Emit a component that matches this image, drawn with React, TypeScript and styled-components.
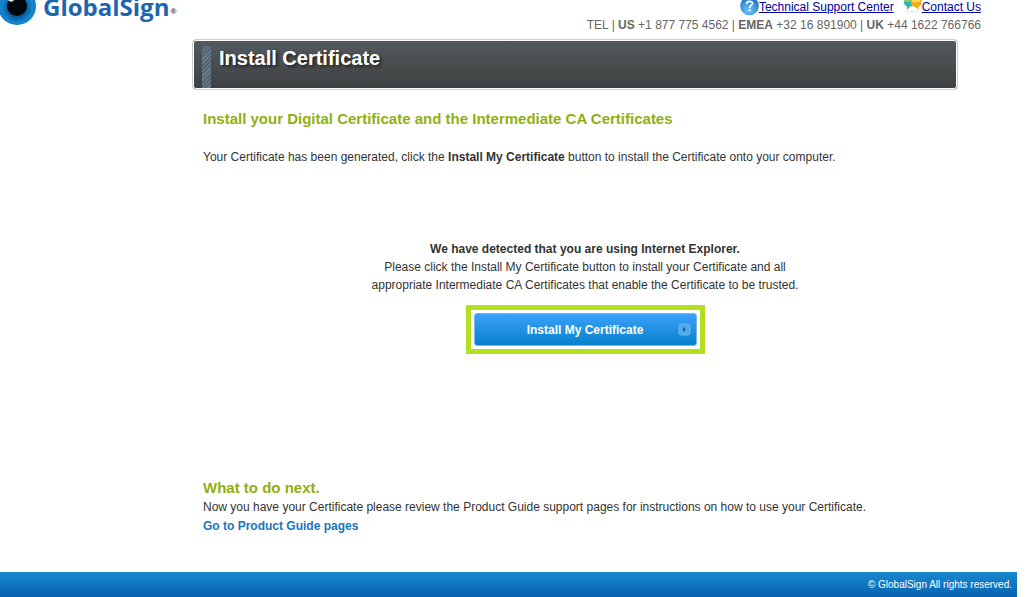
import React from "react";
import styled, { createGlobalStyle } from "styled-components";

const GlobalStyle = createGlobalStyle`
  *, *::before, *::after { box-sizing: border-box; }
  body {
    margin: 0;
    background: #fff;
    color: #333;
    font: 12px/18px "Liberation Sans", Arial, sans-serif;
  }
  h1, h2, p { margin: 0; }
`;

const Page = styled.div`
  display: flex;
  flex-direction: column;
  min-height: 100vh;
  margin-right: 13px;
`;

const Header = styled.header`
  display: flex;
  justify-content: space-between;
  align-items: flex-start;
  height: 39px;
  padding-right: 36px;
`;

const Brand = styled.a`
  display: flex;
  align-items: flex-start;
  color: #1c65b1;
  text-decoration: none;
`;

const EyeMark = styled.svg`
  display: block;
  width: 37px;
  height: 26px;
`;

const BrandName = styled.span`
  margin-left: 6px;
  font: bold 24px/14px "Open Sans", "Noto Sans", sans-serif;
`;

const Registered = styled.span`
  margin: 6px 0 0 1px;
  color: #333;
  font-size: 8px;
  font-weight: bold;
  line-height: 12px;
`;

const Contact = styled.div`
  color: #666;
  text-align: right;
`;

const SupportLinks = styled.nav`
  display: flex;
  justify-content: flex-end;
  gap: 10px;
  height: 16px;
`;

const SupportLink = styled.a`
  display: flex;
  align-items: flex-start;
  color: #0000a0;
  line-height: 14px;
  text-decoration: underline;
`;

const LinkIcon = styled.svg<{ $width: number }>`
  display: block;
  width: ${(p) => p.$width}px;
  height: 16px;
`;

const Main = styled.main`
  flex: 1;
  margin: 0 59px 0 192px;
`;

const Banner = styled.div`
  display: flex;
  height: 51px;
  padding: 6px 0 0 9px;
  border: 1px solid #c9cfd3;
  border-radius: 4px;
  box-shadow: inset 0 0 0 1px #fff;
  background: linear-gradient(#535a5e, #3d4040);
`;

const Stripe = styled.span`
  width: 9px;
  height: 42px;
  margin-right: 8px;
  border-radius: 2px 2px 0 0;
  background: repeating-linear-gradient(135deg, #6b7f8e 0 1px, #536675 1px 3px);
`;

const Title = styled.h1`
  color: #fff;
  font-size: 20px;
  line-height: 24px;
  text-shadow: 2px 2px 3px #222;
`;

const Content = styled.div`
  padding: 18px 11px 0;
`;

const Heading = styled.h2`
  color: #8fb010;
  font-size: 15px;
  line-height: 21px;
`;

const Intro = styled.p`
  margin-top: 19px;
`;

const Detected = styled.section`
  display: flex;
  flex-direction: column;
  align-items: center;
  margin: 74px 0 123px;
  padding-left: 20px;
  text-align: center;
`;

const Highlight = styled.div`
  margin-top: 11px;
  padding: 3px;
  border: 5px solid #b2e021;
`;

const InstallButton = styled.button`
  display: grid;
  grid-template-columns: 24px 1fr 24px;
  align-items: center;
  width: 223px;
  height: 33px;
  padding: 0;
  border: 1px solid #78b7ea;
  border-radius: 3px;
  background: linear-gradient(#3ba1fb, #0880cb);
  color: #fff;
  font: bold 12px/18px "Liberation Sans", Arial, sans-serif;
  cursor: pointer;
`;

const ButtonLabel = styled.span`
  grid-column: 2;
`;

const ArrowIcon = styled.svg`
  display: block;
  width: 13px;
  height: 13px;
  margin-left: 6px;
`;

const GuideLink = styled.a`
  display: block;
  color: #1b75b8;
  font-weight: bold;
  line-height: 20px;
  text-decoration: none;
`;

const Footer = styled.footer`
  height: 25px;
  padding-right: 5px;
  background: linear-gradient(#1989d0, #0762b1);
  color: #fff;
  font-size: 10px;
  line-height: 26px;
  text-align: right;
`;

function Eye() {
  return (
    <EyeMark viewBox="0 0 37 26" aria-hidden="true">
      <defs>
        <radialGradient id="iris" cx="50%" cy="55%" r="50%">
          <stop offset="50%" stopColor="#075da3" />
          <stop offset="80%" stopColor="#1288d0" />
          <stop offset="100%" stopColor="#1d78c0" />
        </radialGradient>
      </defs>
      <circle cx="17" cy="6" r="19" fill="url(#iris)" />
      <circle cx="17" cy="6" r="10" fill="#02070c" />
      <path d="M8 0h6c-1 2-3 2-5 1z" fill="#dceaf2" />
    </EyeMark>
  );
}

function HelpIcon() {
  return (
    <LinkIcon $width={19} viewBox="0 0 19 16" aria-hidden="true">
      <defs>
        <radialGradient id="help" cx="45%" cy="72%" r="65%">
          <stop offset="0%" stopColor="#6ec5f5" />
          <stop offset="70%" stopColor="#3a92dc" />
          <stop offset="100%" stopColor="#1f70c0" />
        </radialGradient>
      </defs>
      <circle cx="9.5" cy="6" r="9.3" fill="url(#help)" />
      <path d="M6.5 4c0-3.5 6-3.5 6-.7 0 2-2.8 2.200-2.800 4.700" fill="none" stroke="#fff" strokeWidth="1.700" />
      <rect x="8.800" y="9.300" width="1.900" height="1.900" fill="#fff" />
    </LinkIcon>
  );
}

function ChatIcon() {
  return (
    <LinkIcon $width={18} viewBox="0 0 18 16" aria-hidden="true">
      <ellipse cx="8" cy="11.500" rx="7" ry="1" fill="#eceeee" />
      <path d="M0 0h8v6.500H6L3 10V6.500C1 6 0 4 0 2z" fill="#35b3b0" />
      <path d="M0 0h7v2H0z" fill="#83cc65" />
      <path d="M7 0h10.500v2c0 3-1.500 4.500-3.500 5l1 3-4-3C8.500 7 7 5 7 3z" fill="#f4ae19" />
      <path d="M8 0h8v1.500c-2 1-6 1-8 0z" fill="#ffd658" />
    </LinkIcon>
  );
}

export default function App() {
  return (
    <>
      <GlobalStyle />
      <Page>
        <Header>
          <Brand href="#home">
            <Eye />
            <BrandName>GlobalSign</BrandName>
            <Registered>®</Registered>
          </Brand>
          <Contact>
            <SupportLinks aria-label="Support">
              <SupportLink href="#support">
                <HelpIcon />
                Technical Support Center
              </SupportLink>
              <SupportLink href="#contact">
                <ChatIcon />
                Contact Us
              </SupportLink>
            </SupportLinks>
            <p>
              TEL | <b>US</b> +1 877 775 4562 | <b>EMEA</b> +32 16 891900 | <b>UK</b> +44 1622 766766
            </p>
          </Contact>
        </Header>
        <Main>
          <Banner>
            <Stripe />
            <Title>Install Certificate</Title>
          </Banner>
          <Content>
            <Heading>Install your Digital Certificate and the Intermediate CA Certificates</Heading>
            <Intro>
              Your Certificate has been generated, click the <b>Install My Certificate</b> button to install the
              Certificate onto your computer.
            </Intro>
            <Detected>
              <p>
                <b>We have detected that you are using Internet Explorer.</b>
                <br />
                Please click the Install My Certificate button to install your Certificate and all
                <br />
                appropriate Intermediate CA Certificates that enable the Certificate to be trusted.
              </p>
              <Highlight>
                <InstallButton type="button">
                  <ButtonLabel>Install My Certificate</ButtonLabel>
                  <ArrowIcon viewBox="0 0 13 13" aria-hidden="true">
                    <rect x="1" y="1" width="11" height="11" rx="2" fill="#4da9ea" stroke="#6bb6ee" />
                    <path d="M5 4l3 2.500-3 2.500z" fill="#0b5f9e" />
                  </ArrowIcon>
                </InstallButton>
              </Highlight>
            </Detected>
            <Heading>What to do next.</Heading>
            <p>
              Now you have your Certificate please review the Product Guide support pages for instructions on how to use
              your Certificate.
            </p>
            <GuideLink href="#guides">Go to Product Guide pages</GuideLink>
          </Content>
        </Main>
        <Footer>© GlobalSign All rights reserved.</Footer>
      </Page>
    </>
  );
}
